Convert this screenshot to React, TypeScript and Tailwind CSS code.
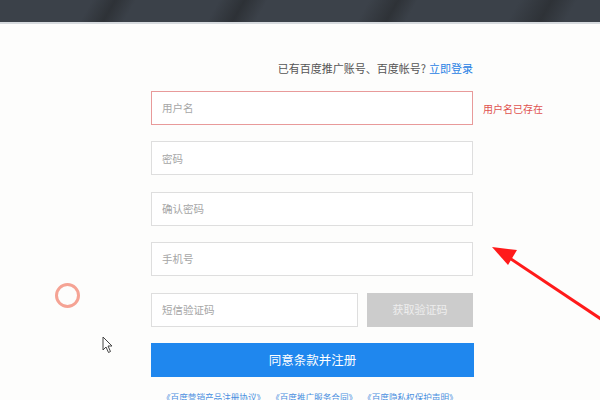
import React from "react";

const font = { fontFamily: '"Noto Sans CJK SC", "Noto Sans", sans-serif' };

function Field({ placeholder, error }: { placeholder: string; error?: boolean }) {
  return (
    <div
      className={`h-[34px] w-[322px] border bg-white flex items-center pl-[10px] text-[10.5px] text-[#a6a6a6] ${
        error ? "border-[#e89a9a]" : "border-[#dedede]"
      }`}
    >
      {placeholder}
    </div>
  );
}

export default function App() {
  return (
    <div className="relative w-[600px] h-[400px] overflow-hidden bg-[#fdfdfc]" style={font}>
      <div className="h-[22px] bg-[linear-gradient(120deg,#3b4149_0px,#3b4149_80px,#2e3237_100px,#3b4149_118px,#3b4149_190px,#2d3136_212px,#3c424a_232px,#3c424a_320px,#2e3237_345px,#3b4149_362px,#3b4149_450px,#2e3237_478px,#3b4149_500px,#3b4149_600px)]" />
      <div className="h-[2px] bg-[#d6dade]" />

      <div className="flex flex-col items-start pl-[151px] pt-[39px]">
        <div className="w-[322px] flex justify-end text-[11px] text-[#555] leading-none">
          <span>已有百度推广账号、百度帐号?</span>
          <span className="text-[#2a82e4] ml-[3px]">立即登录</span>
        </div>

        <div className="mt-[17px] flex flex-col gap-[16.4px]">
          <div className="flex items-center">
            <Field placeholder="用户名" error />
            <span className="ml-[10px] text-[10px] text-[#e0524f]">用户名已存在</span>
          </div>
          <Field placeholder="密码" />
          <Field placeholder="确认密码" />
          <Field placeholder="手机号" />
          <div className="flex w-[322px] gap-[9px]">
            <div className="h-[34px] w-[207px] border border-[#dedede] bg-white flex items-center pl-[10px] text-[10.5px] text-[#a6a6a6]">
              短信验证码
            </div>
            <div className="h-[34px] flex-1 bg-[#cccccc] flex items-center justify-center text-[11px] text-[#eeeeee]">
              获取验证码
            </div>
          </div>
          <div className="h-[34px] w-[323px] bg-[#1f87ee] flex items-center justify-center text-[12.5px] text-white">
            同意条款并注册
          </div>
        </div>

        <div className="mt-[14px] flex gap-[6px] text-[8.6px] text-[#4a8fe0] pl-[11px] whitespace-nowrap">
          <span>《百度营销产品注册协议》</span>
          <span>《百度推广服务合同》</span>
          <span>《百度隐私权保护声明》</span>
        </div>
      </div>

      {/* click circle */}
      <div className="absolute left-[55px] top-[283px] w-[25px] h-[25px] rounded-full border-[3px] border-[#f5a394]" />

      {/* mouse cursor */}
      <svg className="absolute left-[102px] top-[336px]" width="14" height="18" viewBox="0 0 14 18">
        <path d="M1 1 L1 14 L4 11 L6.5 16.5 L8.5 15.5 L6 10 L10 10 Z" fill="#ffffff" stroke="#444" strokeWidth="1" strokeLinejoin="round" />
      </svg>

      {/* red arrow */}
      <svg className="absolute left-0 top-0" width="600" height="400" viewBox="0 0 600 400">
        <line x1="505" y1="255" x2="610" y2="325" stroke="#ff1a1a" strokeWidth="3" />
        <polygon points="492,247 517,250 508,265" fill="#ff1a1a" />
      </svg>
    </div>
  );
}
